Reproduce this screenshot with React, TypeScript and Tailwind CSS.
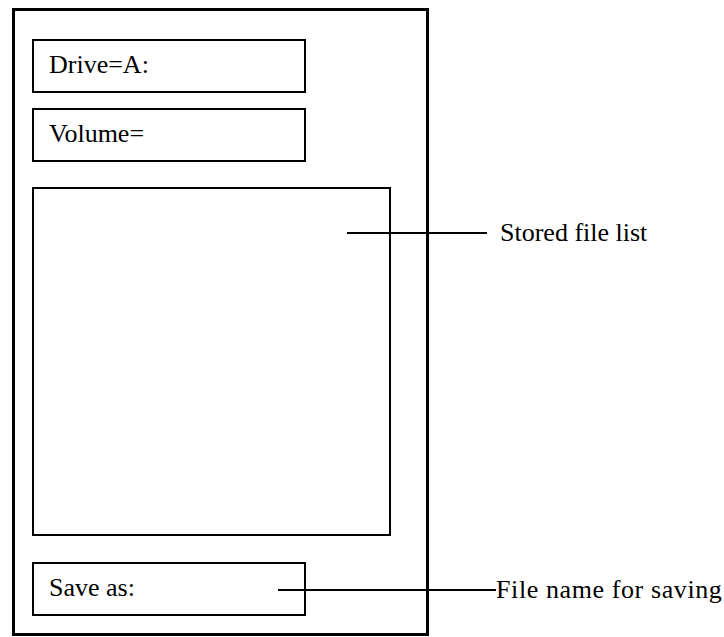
import { FC } from "react";

const FieldBox: FC<{ label?: string; className?: string }> = ({ label, className }) => (
  <div className={`w-[274px] h-[54px] border-2 border-black flex items-center pl-[15px] ${className ?? ""}`}>
    {label && <span className="text-[26px] leading-[26px] pb-[3px]">{label}</span>}
  </div>
);

export default function App() {
  return (
    <div className="relative w-[724px] h-[637px] pt-2 pl-3 bg-white text-black font-['Liberation_Serif']">
      <div className="w-[417px] h-[628px] border-[3px] border-black flex flex-col pl-[17px] pt-[28px]">
        <FieldBox label="Drive=A:" />
        <FieldBox label="Volume=" className="mt-[15px]" />
        <div className="mt-[25px] w-[359px] h-[349px] border-2 border-black" />
        <FieldBox label="Save as:" className="mt-[26px]" />
      </div>

      {/* callouts */}
      <div className="absolute left-[347px] top-[220px] flex items-center">
        <div className="w-[140px] h-[1.5px] bg-black" />
        <span className="ml-[13px] text-[26px] leading-[26px] whitespace-nowrap">Stored file list</span>
      </div>
      <div className="absolute left-[278px] top-[577px] flex items-center">
        <div className="w-[218px] h-[2px] bg-black" />
        <span className="text-[26px] leading-[26px] tracking-[0.6px] whitespace-nowrap">File name for saving</span>
      </div>
    </div>
  );
}
